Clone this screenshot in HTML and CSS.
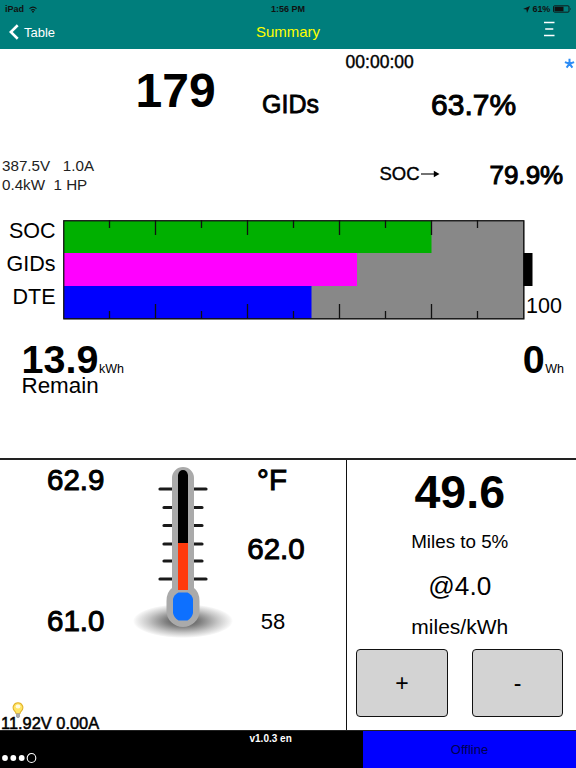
FILE: index.html
```html
<!DOCTYPE html>
<html lang="en">
<head>
  <meta charset="UTF-8" />
  <meta name="viewport" content="width=device-width, initial-scale=1.0"/>
  <title>Summary</title>
  <link rel="stylesheet" href="styles.css">
</head>
<body>

  <!-- Header -->
  <header class="header">
    <div class="status">
      <div class="status-left">
        <span>iPad</span>
        <svg class="wifi" viewBox="0 0 8 7" width="8" height="7">
          <path d="M0.5 2.6 Q4 -0.4 7.5 2.6 M2 4.3 Q4 2.6 6 4.3" fill="none" stroke="#111" stroke-width="1.1"/>
          <circle cx="4" cy="5.7" r="0.9" fill="#111"/>
        </svg>
      </div>
      <span class="clock">1:56 PM</span>
      <div class="status-right">
        <svg width="7" height="7" viewBox="0 0 7 7"><path d="M7 0 L4 7 L3.4 3.6 L0 3Z" fill="#111"/></svg>
        <span>61%</span>
        <svg width="19" height="8" viewBox="0 0 19 8">
          <rect x="0.5" y="0.8" width="15.5" height="6.4" rx="1" fill="none" stroke="#111" stroke-width="0.9"/>
          <rect x="1.5" y="1.7" width="9" height="4.6" fill="#111"/>
          <path d="M17 2.7 Q18.4 4 17 5.3Z" fill="#111"/>
        </svg>
      </div>
    </div>
    <div class="nav">
      <div class="back">
        <svg width="10" height="16" viewBox="0 0 10 16"><path d="M8.7 1.2 L1.8 8 L8.7 14.8" fill="none" stroke="#fff" stroke-width="2.6"/></svg>
        <span>Table</span>
      </div>
      <h1 class="title">Summary</h1>
      <svg class="menu" width="11" height="16" viewBox="0 0 11 16"><path d="M0 1.4H10.5M1.2 8H9.3M0 14.5H10.5" stroke="#fff" stroke-width="1.5"/></svg>
    </div>
  </header>

  <!-- GIDs and SOC readings -->
  <section class="gids">
    <span class="gids-count">179</span>
    <span class="gids-label">GIDs</span>
    <div class="gids-right">
      <span class="timer">00:00:00</span>
      <span class="gids-percent">63.7%</span>
    </div>
    <svg class="star" width="11" height="11" viewBox="0 0 11 11"><path d="M5.5 5.7V0.8M5.5 5.7L0.9 4.1M5.5 5.7L10.1 4.1M5.5 5.7L2.6 9.7M5.5 5.7L8.4 9.7" stroke="#2d8cf5" stroke-width="2"/></svg>
  </section>

  <section class="soc">
    <div class="power">387.5V   1.0A
0.4kW  1 HP</div>
    <div class="soc-label">
      <span>SOC</span>
      <svg width="20" height="8" viewBox="0 0 20 8"><path d="M1 4H15" stroke="#000" stroke-width="1.1"/><path d="M13.8 0.8L19.5 4L13.8 7.2Z"/></svg>
    </div>
    <span class="soc-percent">79.9%</span>
  </section>

  <!-- Battery bars -->
  <section class="battery">
    <div class="battery-labels">
      <span>SOC</span>
      <span>GIDs</span>
      <span>DTE</span>
    </div>
    <svg class="chart" width="471" height="100" viewBox="0 0 471 100">
      <rect x="0.5" y="0.5" width="461" height="99" fill="#888"/>
      <rect x="1" y="1" width="367.5" height="32" fill="#00b000"/>
      <rect x="1" y="33" width="293" height="33" fill="#f0f"/>
      <rect x="1" y="66" width="247.5" height="33" fill="#00f"/>
      <rect x="0.75" y="0.75" width="460" height="98" fill="none" stroke="#111" stroke-width="1.3"/>
      <path d="M46.5 0V8M138.5 0V8M230.5 0V8M322.5 0V8M414.5 0V8M46.5 99V91M138.5 99V91M230.5 99V91M322.5 99V91M414.5 99V91" stroke="#111" stroke-width="1.3"/>
      <path d="M92.5 0V15M184.5 0V15M276.5 0V15M368.5 0V15M92.5 99V84M184.5 99V84M276.5 99V84M368.5 99V84" stroke="#111" stroke-width="1.3"/>
      <rect x="460.5" y="33" width="9" height="33" fill="#000"/>
    </svg>
    <span class="chart-max">100</span>
  </section>

  <section class="energy">
    <div>
      <div class="amount"><b>13.9</b><small>kWh</small></div>
      <div class="remain">Remain</div>
    </div>
    <div class="amount"><b>0</b><small>Wh</small></div>
  </section>

  <!-- Bottom panels -->
  <main class="panels">
    <section class="temps">
      <div class="temp-row">
        <div class="temp-left">
          <span>62.9</span>
          <span>61.0</span>
        </div>
        <svg class="thermometer" width="104" height="180" viewBox="0 0 104 180">
          <defs>
            <radialGradient id="shade">
              <stop offset="0" stop-color="#444"/>
              <stop offset="0.35" stop-color="#808080"/>
              <stop offset="0.7" stop-color="#c8c8c8"/>
              <stop offset="0.95" stop-color="#f4f4f4"/>
              <stop offset="1" stop-color="#fff"/>
            </radialGradient>
          </defs>
          <ellipse cx="52" cy="161" rx="50" ry="17" fill="url(#shade)"/>
          <path d="M29 29H75M33 47.5H71M33 65.5H71M33 84H71M33 101H71M29 119H75" stroke="#1a1a1a" stroke-width="3.2" stroke-linecap="round"/>
          <path d="M41 18a11 11 0 0 1 22 0V128Q68.5 132 68.5 141V151a16.5 16 0 0 1-33 0V141Q35.5 132 41 128Z" fill="#aaa"/>
          <path d="M47 84V15Q48 10 52 10Q56 10 57 15V84Z"/>
          <rect x="47" y="83" width="10" height="47" fill="#ff3a0c"/>
          <path d="M47.5 132.5H56.5Q61 134.5 62 139V153Q61 158 56.5 160.5H47.5Q43 158 42 153V139Q43 134.5 47.5 132.5Z" fill="#0d70ff"/>
        </svg>
        <div class="temp-right">
          <span>°F</span>
          <span>62.0</span>
          <span class="ambient">58</span>
        </div>
      </div>
      <div class="aux">
        <svg class="bulb" width="12" height="17" viewBox="0 0 12 17">
          <path d="M6 0.8a4.8 4.8 0 0 0-3.3 8.3Q3.8 10.2 4 11.5H8Q8.2 10.2 9.3 9.1A4.8 4.8 0 0 0 6 0.8Z" fill="#ffe564" stroke="#e3b32c" stroke-width="1.1"/>
          <ellipse cx="6" cy="4.6" rx="2.4" ry="2" fill="#fffbe0"/>
          <path d="M4 11.5H8V14.5L6.8 16H5.2L4 14.5Z" fill="#aaa"/>
        </svg>
        <span>11.92V 0.00A</span>
      </div>
    </section>

    <section class="range">
      <span class="miles">49.6</span>
      <span class="miles-label">Miles to 5%</span>
      <span class="rate">@4.0</span>
      <span class="rate-label">miles/kWh</span>
      <div class="buttons">
        <button>+</button>
        <button>-</button>
      </div>
    </section>
  </main>

  <!-- Footer -->
  <footer class="footer">
    <div class="version">
      <span>v1.0.3 en</span>
      <svg width="37" height="12" viewBox="0 0 37 12">
        <g fill="#fff"><circle cx="4" cy="6" r="2.9"/><circle cx="12.3" cy="6" r="2.9"/><circle cx="20.7" cy="6" r="2.9"/></g>
        <ellipse cx="30.5" cy="6" rx="4.3" ry="4.5" fill="none" stroke="#fff" stroke-width="1.1"/>
      </svg>
    </div>
    <div class="offline">Offline</div>
  </footer>

</body>
</html>
```
FILE: styles.css
```css
* {
  box-sizing: border-box;
}

body {
  margin: 0;
  width: 576px;
  height: 768px;
  overflow: hidden;
  font-family: "Liberation Sans", Arial, sans-serif;
  line-height: 1;
  color: #000;
  background-color: #fff;
}

svg {
  display: block;
  flex: none;
}

/* header */
.header {
  height: 48.5px;
  margin-bottom: -0.5px;
  background-color: #007e7c;
}

.status {
  display: grid;
  grid-template-columns: 1fr auto 1fr;
  align-items: center;
  height: 18px;
  padding: 0 5px;
  font-size: 9px;
  font-weight: bold;
  color: #111;
}

.status-left, .status-right {
  display: flex;
  align-items: center;
  gap: 5px;
}

.status-right {
  justify-content: flex-end;
  gap: 3px;
  letter-spacing: -0.2px;
  margin-right: -1px;
}

.nav {
  display: grid;
  grid-template-columns: 1fr auto 1fr;
  align-items: center;
  height: 28px;
  padding: 0 21px 0 9px;
}

.back {
  display: flex;
  align-items: center;
  gap: 5px;
  font-size: 13px;
  color: #fff;
}

.title {
  margin: -1px 0 0 12px;
  font-size: 15px;
  font-weight: normal;
  line-height: 17px;
  letter-spacing: -0.05px;
  color: #ff0;
}

.menu {
  justify-self: end;
  margin-top: -6px;
}

/* readings */
.gids {
  display: flex;
  align-items: flex-start;
  height: 92px;
}

.gids-count {
  margin: 19px 0 0 135.5px;
  font-size: 48px;
  font-weight: bold;
}

.gids-label {
  width: 59px;
  margin: 44px 0 0 46.5px;
  font-size: 25px;
  -webkit-text-stroke: 0.8px #000;
}

.gids-right {
  display: flex;
  flex-direction: column;
  margin: 6px 0 0 24.5px;
}

.timer {
  font-size: 17.5px;
  -webkit-text-stroke: 0.4px #000;
}

.gids-percent {
  margin: 18px 0 0 85.5px;
  font-size: 30px;
  -webkit-text-stroke: 1px #000;
}

.star {
  margin: 10px 1px 0 auto;
}

.soc {
  display: flex;
  align-items: flex-start;
  height: 80px;
}

.power {
  width: 379.5px;
  padding: 17px 0 0 2px;
  font-size: 15.2px;
  line-height: 18.5px;
  white-space: pre;
  color: #222;
}

.soc-label {
  display: flex;
  align-items: center;
  width: 110px;
  padding-top: 25px;
  font-size: 18.5px;
  -webkit-text-stroke: 0.4px #000;
}

.soc-percent {
  padding-top: 22px;
  font-size: 26px;
  -webkit-text-stroke: 1px #000;
}

/* battery */
.battery {
  display: flex;
  height: 120px;
}

.battery-labels {
  width: 55.5px;
  font-size: 21.5px;
  line-height: 33px;
  text-align: right;
  margin-top: -5px;
}

.battery-labels span {
  display: block;
}

.chart {
  margin-left: 7px;
}

.chart-max {
  margin: 76px 0 0 -7.5px;
  font-size: 21.5px;
}

.energy {
  display: flex;
  justify-content: space-between;
  align-items: flex-start;
  height: 118px;
  padding: 0 12px 0 21.5px;
}

.amount b {
  font-size: 39.5px;
}

.amount small {
  margin-left: 0.5px;
  font-size: 12.5px;
}

.remain {
  margin-top: -5px;
  font-size: 22.4px;
}

/* panels */
.panels {
  display: flex;
  height: 273px;
  border-top: 2px solid #222;
  border-bottom: 1px solid #222;
}

.temps {
  width: 346.5px;
  border-right: 1.5px solid #111;
}

.temp-row {
  display: flex;
  height: 242px;
}

.temp-left, .temp-right {
  display: flex;
  flex-direction: column;
  font-size: 29.5px;
  -webkit-text-stroke: 1px #000;
}

.temp-left {
  width: 131px;
  padding: 5px 0 0 47px;
  gap: 111px;
}

.temp-right {
  align-items: center;
  width: 82px;
  padding-top: 5px;
  gap: 39px;
}

.ambient {
  margin: 9px 6px 0 0;
  font-size: 22px;
  -webkit-text-stroke: 0;
}

.temp-right span:first-child {
  margin-right: 8px;
}

.aux {
  font-size: 16.4px;
  padding-left: 1px;
  -webkit-text-stroke: 0.5px #000;
}

.aux span {
  display: block;
  margin-top: -4px;
}

.bulb {
  margin-left: 11px;
}

.range {
  display: flex;
  flex: 1;
  flex-direction: column;
  align-items: center;
  padding-right: 3px;
}

.miles {
  margin-top: 9px;
  font-size: 46.5px;
  font-weight: bold;
}

.miles-label {
  margin-top: 17px;
  font-size: 18.8px;
}

.rate {
  margin-top: 22px;
  font-size: 26.2px;
}

.rate-label {
  margin-top: 16px;
  font-size: 21px;
}

.buttons {
  display: flex;
  gap: 24px;
  margin-top: 12px;
}

.buttons button {
  width: 91.5px;
  height: 68px;
  padding: 2px 0 0;
  font-family: inherit;
  font-size: 23px;
  color: #000;
  background-color: #d3d3d3;
  border: 1.5px solid #111;
  border-radius: 4px;
}

/* footer */
.footer {
  display: flex;
  height: 37px;
}

.version {
  width: 363px;
  padding-top: 3px;
  font-size: 10px;
  font-weight: bold;
  color: #fff;
  background-color: #000;
}

.version span {
  display: block;
  margin-left: 249.5px;
}

.version svg {
  margin: 8px 0 0 1px;
}

.offline {
  flex: 1;
  padding-top: 12px;
  font-size: 13px;
  text-align: center;
  color: #000050;
  background-color: #00f;
}
```
